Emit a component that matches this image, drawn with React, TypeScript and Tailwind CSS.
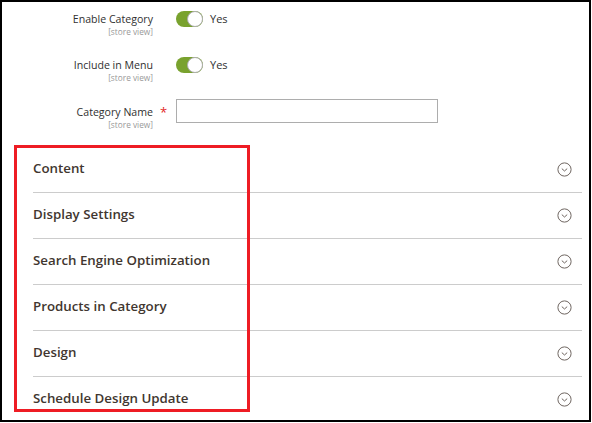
import React from 'react';

const sections = [
    'Content',
    'Display Settings',
    'Search Engine Optimization',
    'Products in Category',
    'Design',
    'Schedule Design Update',
];

function Toggle() {
    return (
        <span className="relative inline-flex h-[16px] w-[27px] items-center rounded-full bg-[#79a22e]">
            <span className="absolute right-0 top-0 h-[16px] w-[16px] rounded-full border border-[#adadad] bg-white" />
        </span>
    );
}

function ChevronCircle() {
    return (
        <svg width="15" height="15" viewBox="0 0 15 15" fill="none">
            <circle cx="7.5" cy="7.5" r="6.6" stroke="#6f6661" strokeWidth="1" />
            <path d="M4.8 6.6 L7.5 9 L10.2 6.6" stroke="#6f6661" strokeWidth="1" />
        </svg>
    );
}

function Label({ text, required }: { text: string; required?: boolean }) {
    return (
        <div className="flex w-[174px] shrink-0">
            <div className="flex w-[151px] flex-col items-end">
                <span className="text-[10.6px] leading-[16px] text-[#303030]">{text}</span>
                <span className="text-[8.3px] leading-[10px] text-[#999999]">[store view]</span>
            </div>
            {required && <span className="ml-[7px] text-[13px] leading-[16px] text-[#e22626]">*</span>}
        </div>
    );
}

export default function App() {
    return (
        <div
            className="relative h-[422px] w-[591px] overflow-hidden border-2 border-black bg-white"
            style={{ fontFamily: '"Open Sans", "Liberation Sans", sans-serif' }}
        >
            {/* Form fields */}
            <div className="flex flex-col pt-[9px]">
                <div className="flex h-[46px] items-start">
                    <Label text="Enable Category" />
                    <Toggle />
                    <span className="ml-[7px] text-[11px] leading-[16px] text-[#303030]">Yes</span>
                </div>
                <div className="flex h-[42px] items-start">
                    <Label text="Include in Menu" />
                    <Toggle />
                    <span className="ml-[7px] text-[11px] leading-[16px] text-[#303030]">Yes</span>
                </div>
                <div className="flex items-start">
                    <div className="pt-[5px]">
                        <Label text="Category Name" required />
                    </div>
                    <input className="h-[24px] w-[262px] border border-[#adadad] bg-white outline-none" />
                </div>
            </div>

            {/* Collapsible sections */}
            <div className="mt-[17px] flex flex-col pl-[31px] pr-[7px]">
                {sections.map((s) => (
                    <div
                        key={s}
                        className="flex h-[46px] shrink-0 items-center justify-between border-b border-[#cccccc] pb-[1px]"
                    >
                        <span className="text-[13.3px] font-semibold text-[#41362f]">{s}</span>
                        <span className="mr-[10px] flex">
                            <ChevronCircle />
                        </span>
                    </div>
                ))}
            </div>

            {/* Annotation box */}
            <div className="absolute left-[12px] top-[143px] h-[267px] w-[236px] border-[3px] border-[#ee1c24]" />
        </div>
    );
}
